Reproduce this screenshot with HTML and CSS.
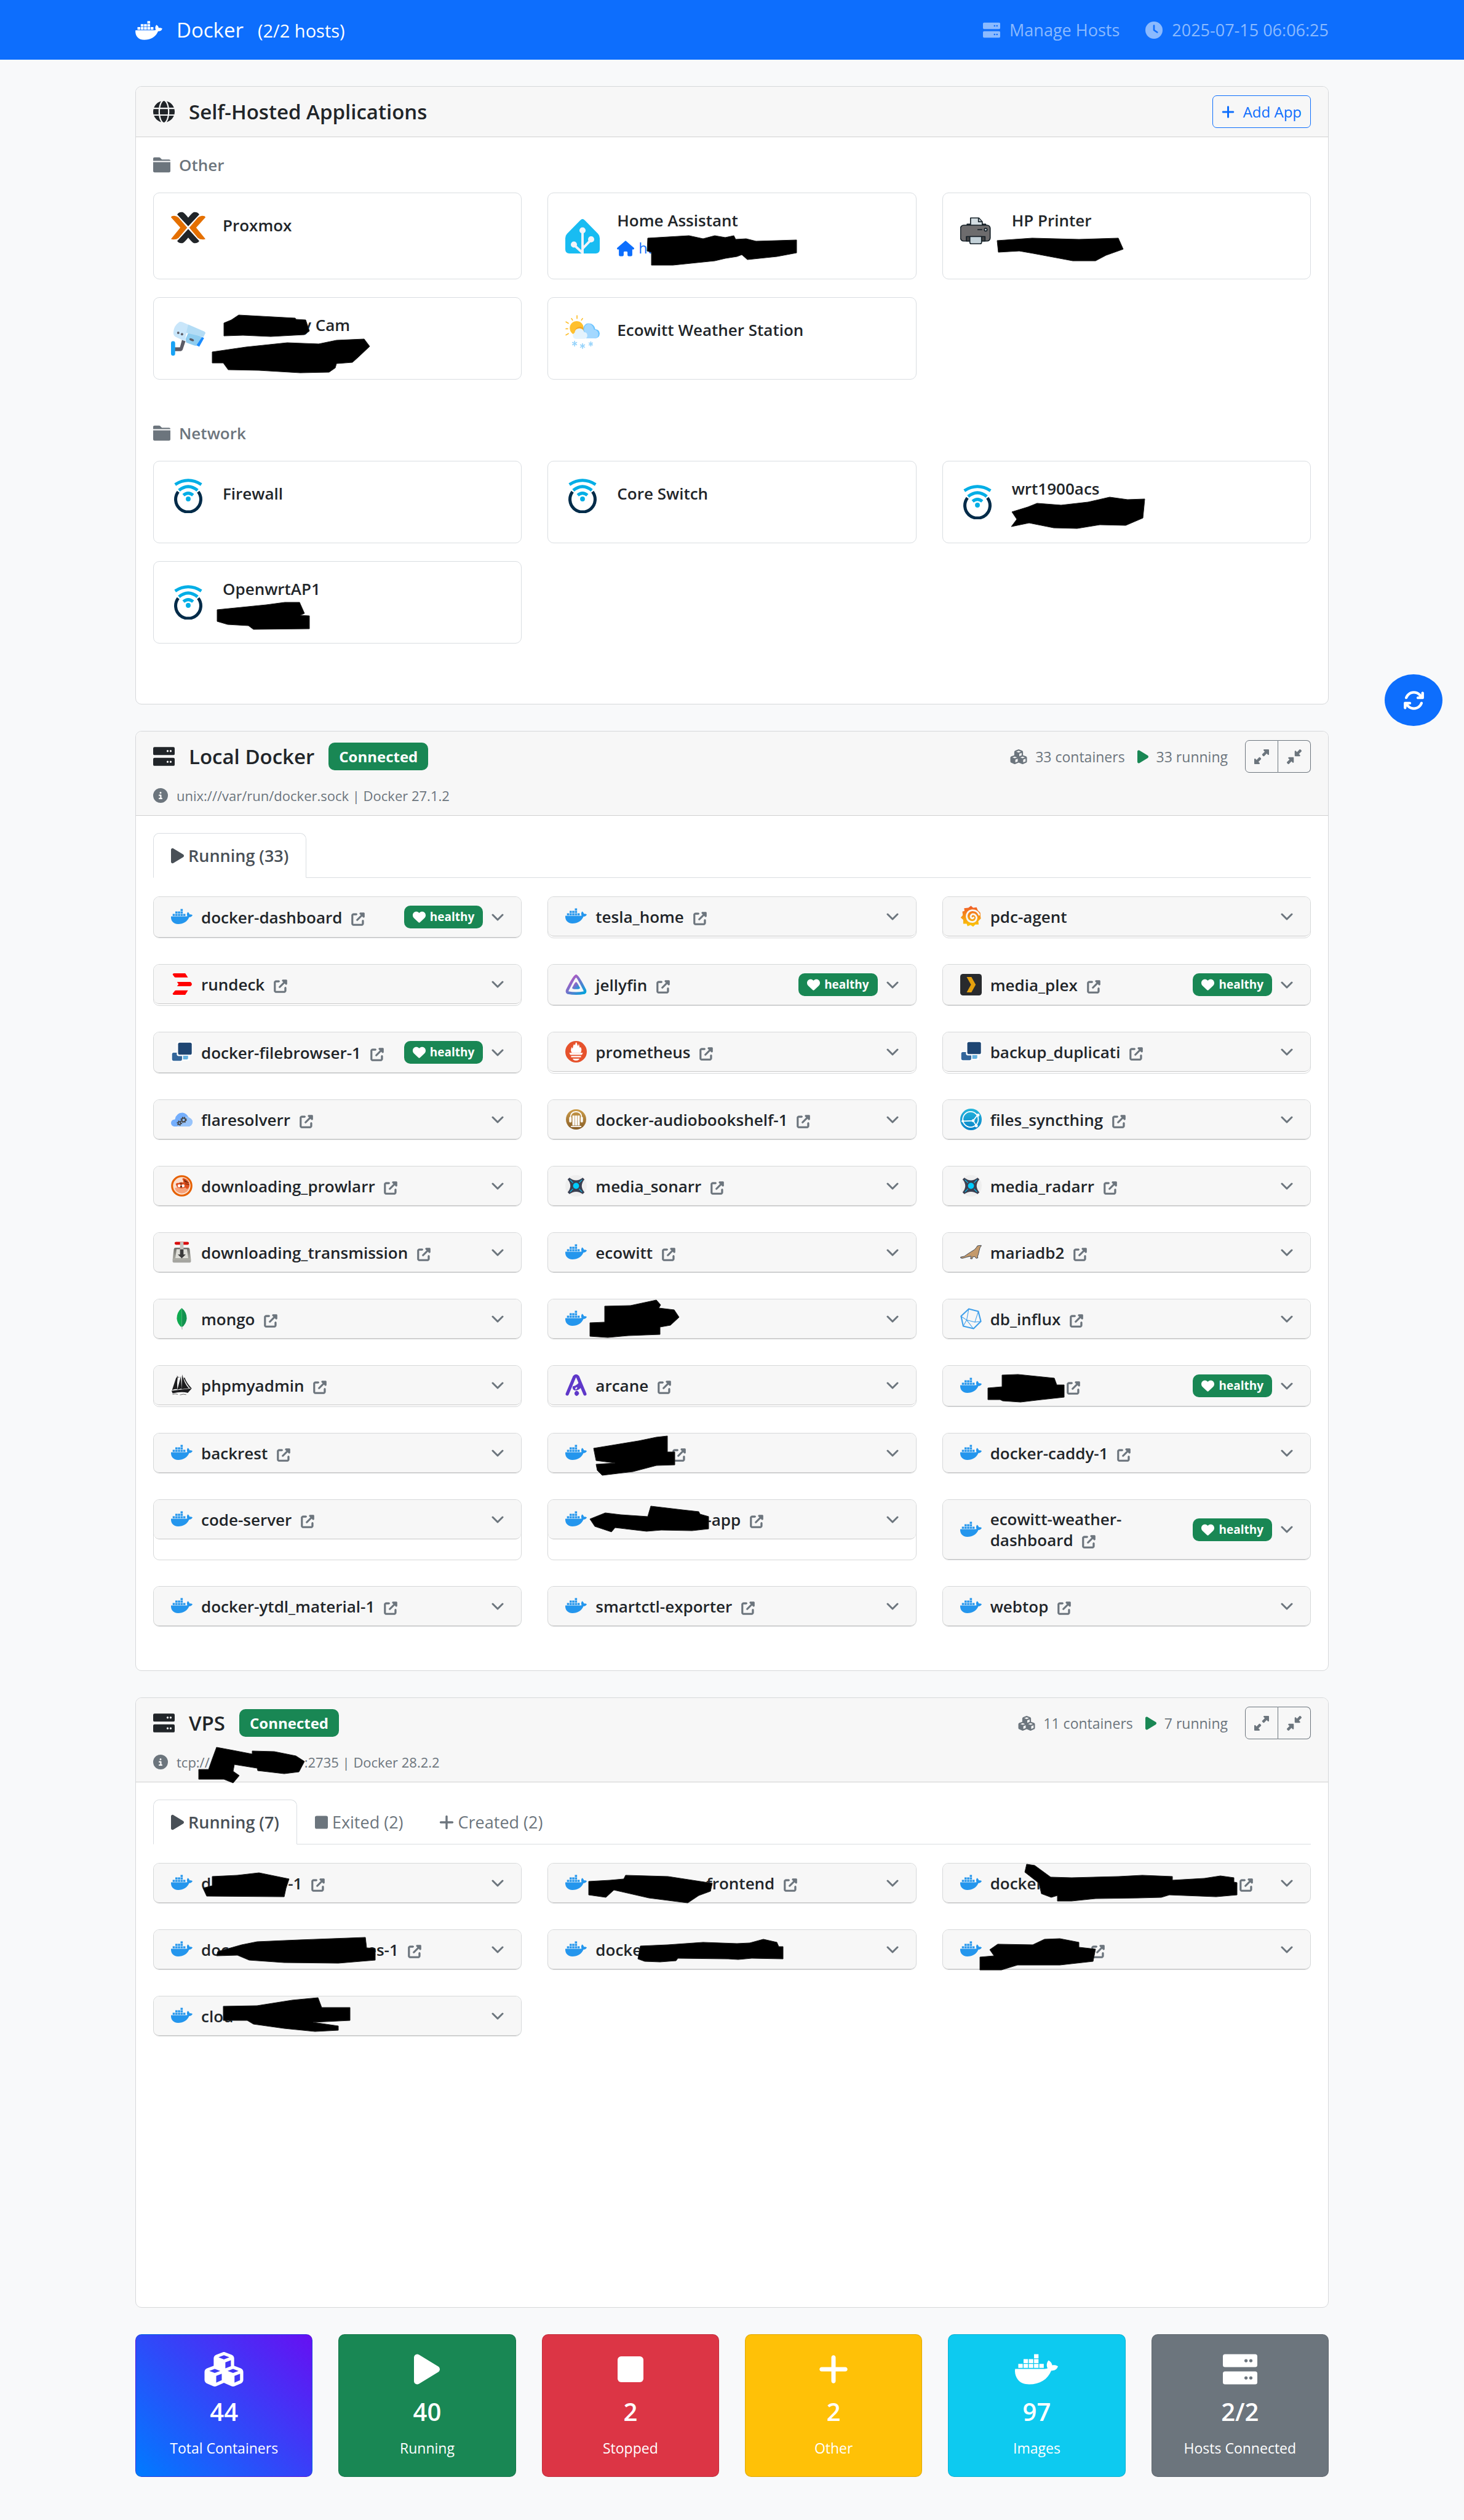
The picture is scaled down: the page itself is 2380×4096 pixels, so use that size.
FILE: index.html
```html
<!DOCTYPE html>
<html lang="en">
<head>
<meta charset="utf-8">
<meta name="viewport" content="width=device-width, initial-scale=1">
<title>Docker Dashboard</title>
<link rel="stylesheet" href="styles.css">
</head>
<body>
<svg class="sprite" aria-hidden="true">
<defs>
<linearGradient id="g-jelly" x1="0" y1="0" x2="1" y2="1"><stop offset="0.2" stop-color="#aa5cc3"/><stop offset="1" stop-color="#00a4dc"/></linearGradient>
<linearGradient id="g-graf" x1="0" y1="0" x2="0" y2="1"><stop offset="0" stop-color="#f05a28"/><stop offset="1" stop-color="#fbca0a"/></linearGradient>
<linearGradient id="g-abs" x1="0" y1="0" x2="0" y2="1"><stop offset="0" stop-color="#cd9d49"/><stop offset="1" stop-color="#875d27"/></linearGradient>
<linearGradient id="g-sync" x1="0" y1="0" x2="0" y2="1"><stop offset="0" stop-color="#26b6db"/><stop offset="1" stop-color="#0882c8"/></linearGradient>
<linearGradient id="g-trans" x1="0" y1="0" x2="0" y2="1"><stop offset="0" stop-color="#6d6d68"/><stop offset="1" stop-color="#b5b5ae"/></linearGradient>
</defs>
<symbol id="whale" viewBox="0 0 640 512"><path d="M349.9 236.3h-66.1v-59.4h66.1v59.4zm0-204.3h-66.1v60.7h66.1V32zm78.2 144.8H362v59.4h66.1v-59.4zm-156.3-72.1h-66.1v60.1h66.1v-60.1zm78.1 0h-66.1v60.1h66.1v-60.1zm276.8 100c-14.4-9.7-47.6-13.2-73.1-8.4-3.3-24-16.7-44.9-41.1-63.7l-14-9.3-9.3 14c-18.4 27.8-23.4 73.6-3.7 103.8-8.7 4.7-25.8 11.1-48.4 10.7H2.4c-8.7 50.8 5.8 116.8 44 162.1 37.1 43.9 92.7 66.2 165.4 66.2 157.4 0 273.9-72.5 328.4-204.2 21.4.4 67.6.1 91.3-45.2 1.5-2.5 6.6-13.2 8.5-17.1l-13.3-8.9zm-511.1-27.9h-66v59.4h66.1v-59.4zm78.1 0h-66.1v59.4h66.1v-59.4zm78.1 0h-66.1v59.4h66.1v-59.4zm-78.1-72.1h-66.1v60.1h66.1v-60.1z"/></symbol>
<symbol id="server" viewBox="0 0 512 512"><path fill-rule="evenodd" d="M32 32H480a32 32 0 0 1 32 32V192a32 32 0 0 1-32 32H32a32 32 0 0 1-32-32V64a32 32 0 0 1 32-32zM344 104a24 24 0 1 0 0 48 24 24 0 1 0 0-48zM416 104a24 24 0 1 0 0 48 24 24 0 1 0 0-48zM32 288H480a32 32 0 0 1 32 32V448a32 32 0 0 1-32 32H32a32 32 0 0 1-32-32V320a32 32 0 0 1 32-32zM344 360a24 24 0 1 0 0 48 24 24 0 1 0 0-48zM416 360a24 24 0 1 0 0 48 24 24 0 1 0 0-48z"/></symbol>
<symbol id="clock" viewBox="0 0 512 512"><path fill-rule="evenodd" d="M256 0a256 256 0 1 1 0 512A256 256 0 1 1 256 0zM232 120V256c0 8 4 15.5 10.7 20l96 64c11 7.4 25.9 4.4 33.3-6.7s4.4-25.9-6.7-33.3L280 243.2V120c0-13.3-10.7-24-24-24s-24 10.7-24 24z"/></symbol>
<symbol id="globe" viewBox="0 0 512 512"><path d="M352 256c0 22.2-1.2 43.6-3.3 64H163.3c-2.2-20.4-3.3-41.8-3.3-64s1.2-43.6 3.3-64H348.7c2.2 20.4 3.3 41.8 3.3 64zm28.8-64H503.9c5.3 20.5 8.1 41.9 8.1 64s-2.8 43.5-8.1 64H380.8c2.1-20.6 3.2-42 3.2-64s-1.1-43.4-3.2-64zm112.6-32H376.7c-10-63.9-29.8-117.4-55.3-151.6c78.3 20.7 142 77.5 171.9 151.6zm-149.1 0H167.7c6.1-36.4 15.5-68.6 27-94.7c10.5-23.6 22.2-40.7 33.5-51.5C239.4 3.2 248.7 0 256 0s16.6 3.2 27.8 13.8c11.3 10.8 23 27.9 33.5 51.5c11.6 26 20.9 58.2 27 94.7zm-209 0H18.6C48.6 85.9 112.2 29.1 190.6 8.4C165.1 42.6 145.3 96.1 135.3 160zM8.1 192H131.2c-2.1 20.6-3.2 42-3.2 64s1.1 43.4 3.2 64H8.1C2.8 299.5 0 278.1 0 256s2.8-43.5 8.1-64zM194.7 446.6c-11.6-26-20.9-58.2-27-94.6H344.3c-6.1 36.4-15.5 68.6-27 94.6c-10.5 23.6-22.2 40.7-33.5 51.5C272.6 508.8 263.3 512 256 512s-16.6-3.2-27.8-13.8c-11.3-10.8-23-27.9-33.5-51.5zM135.3 352c10 63.9 29.8 117.4 55.3 151.6C112.2 482.9 48.6 426.1 18.6 352H135.3zm358.1 0c-30 74.1-93.6 130.9-171.9 151.6c25.5-34.2 45.2-87.7 55.3-151.6H493.4z"/></symbol>
<symbol id="folder" viewBox="0 0 512 512"><path d="M0 138V72C0 48 16 32 40 32H180c12 0 22 4 30 12l46 46c5 4 10 6 16 6H472c24 0 40 14 40 42zM0 172H512V440c0 24-16 40-40 40H40c-24 0-40-16-40-40z"/></symbol>
<symbol id="plus" viewBox="0 0 448 512"><path d="M256 80c0-17.7-14.3-32-32-32s-32 14.3-32 32V224H48c-17.7 0-32 14.3-32 32s14.3 32 32 32H192V432c0 17.7 14.3 32 32 32s32-14.3 32-32V288H400c17.7 0 32-14.3 32-32s-14.3-32-32-32H256V80z"/></symbol>
<symbol id="play" viewBox="0 0 384 512"><path d="M73 39c-14.8-9.1-33.4-9.4-48.5-.9S0 62.6 0 80V432c0 17.4 9.4 33.4 24.5 41.9s33.7 8.1 48.5-.9L361 297c14.3-8.7 23-24.2 23-41s-8.7-32.2-23-41L73 39z"/></symbol>
<symbol id="stop" viewBox="0 0 384 512"><rect y="64" width="384" height="384" rx="52"/></symbol>
<symbol id="info" viewBox="0 0 512 512"><path fill-rule="evenodd" d="M256 512A256 256 0 1 0 256 0a256 256 0 1 0 0 512zM216 336h24V272H216c-13.3 0-24-10.7-24-24s10.7-24 24-24h48c13.3 0 24 10.7 24 24v88h8c13.3 0 24 10.7 24 24s-10.7 24-24 24H216c-13.3 0-24-10.7-24-24s10.7-24 24-24zm40-208a32 32 0 1 1 0 64 32 32 0 1 1 0-64z"/></symbol>
<symbol id="chev" viewBox="0 0 20 12"><path d="M2 2l8 8 8-8" fill="none" stroke="currentColor" stroke-width="3" stroke-linecap="round" stroke-linejoin="round"/></symbol>
<symbol id="heart" viewBox="0 0 512 512"><path d="M47.6 300.4L228.3 469.1c7.5 7 17.4 10.9 27.7 10.9s20.2-3.9 27.7-10.9L464.4 300.4c30.4-28.3 47.6-68 47.6-109.5v-5.8c0-69.9-50.5-129.5-119.4-141C347 36.5 300.6 51.4 268 84L256 96 244 84c-32.6-32.6-79-47.5-124.6-39.9C50.5 55.6 0 115.2 0 185.1v5.8c0 41.5 17.2 81.2 47.6 109.5z"/></symbol>
<symbol id="cubes" viewBox="0 0 576 512"><path fill-rule="evenodd" d="M290.8 48.6l78.4 29.7L288 109.5 206.8 78.3l78.4-29.7c1.8-.7 3.8-.7 5.7 0zM136 92.5V204.7c-1.3 .4-2.6 .8-3.9 1.3l-96 36.4C14.4 250.6 0 271.5 0 294.7V413.9c0 22.2 13.1 42.3 33.5 51.3l96 42.2c14.4 6.3 30.7 6.3 45.1 0L288 457.5l113.5 49.9c14.4 6.3 30.7 6.3 45.1 0l96-42.2c20.3-8.9 33.5-29.1 33.5-51.3V294.7c0-23.3-14.4-44.1-36.1-52.4l-96-36.4c-1.3-.5-2.6-.9-3.9-1.3V92.5c0-23.3-14.4-44.1-36.1-52.4l-96-36.4c-12.8-4.8-26.9-4.8-39.7 0l-96 36.4C150.4 48.4 136 69.3 136 92.5zM392 210.6l-82.4 31.2V152.6L392 121v89.6zM154.8 250.9l78.4 29.7L152 311.7 70.8 280.6l78.4-29.7c1.8-.7 3.8-.7 5.7 0zm18.8 204.4V354.8L256 323.2v95.9l-82.4 36.2zM421.2 250.9c1.8-.7 3.8-.7 5.7 0l78.4 29.7L424 311.7l-81.2-31.1 78.4-29.7zM523.2 421.2l-77.6 34.1V354.8L528 323.2v90.7c0 3.2-1.9 6-4.8 7.3z"/></symbol>
<symbol id="ext" viewBox="-10 -10 532 532"><path stroke="currentColor" stroke-width="14" d="M352 0c-12.9 0-24.6 7.8-29.6 19.8s-2.2 25.7 6.9 34.9L370.7 96 201.4 265.4c-12.5 12.5-12.5 32.8 0 45.3s32.8 12.5 45.3 0L416 141.3l41.4 41.4c9.2 9.2 22.9 11.9 34.9 6.9s19.8-16.6 19.8-29.6V32c0-17.7-14.3-32-32-32H352zM80 32C35.8 32 0 67.8 0 112V432c0 44.2 35.8 80 80 80H400c44.2 0 80-35.8 80-80V320c0-17.7-14.3-32-32-32s-32 14.3-32 32V432c0 8.8-7.2 16-16 16H80c-8.8 0-16-7.2-16-16V112c0-8.8 7.2-16 16-16H192c17.7 0 32-14.3 32-32s-14.3-32-32-32H80z"/></symbol>
<symbol id="expand" viewBox="0 0 512 512"><path d="M344 0H488c13.3 0 24 10.7 24 24V168c0 9.7-5.8 18.5-14.8 22.2s-19.3 1.7-26.2-5.2l-39-39-87 87c-9.4 9.4-24.6 9.4-33.9 0l-32-32c-9.4-9.4-9.4-24.6 0-33.9l87-87L327 41c-6.9-6.9-8.9-17.2-5.2-26.2S334.3 0 344 0zM168 512H24c-13.3 0-24-10.7-24-24V344c0-9.7 5.8-18.5 14.8-22.2s19.3-1.7 26.2 5.2l39 39 87-87c9.4-9.4 24.6-9.4 33.9 0l32 32c9.4 9.4 9.4 24.6 0 33.9l-87 87 39 39c6.9 6.9 8.9 17.2 5.2 26.2s-12.5 14.8-22.2 14.8z"/></symbol>
<symbol id="compress" viewBox="0 0 512 512"><path d="M439 7c9.4-9.4 24.6-9.4 33.9 0l32 32c9.4 9.4 9.4 24.6 0 33.9l-87 87 39 39c6.9 6.9 8.9 17.2 5.2 26.2s-12.5 14.8-22.2 14.8H296c-13.3 0-24-10.7-24-24V72c0-9.7 5.8-18.5 14.8-22.2s19.3-1.7 26.2 5.2l39 39L439 7zM72 272H216c13.3 0 24 10.7 24 24V440c0 9.7-5.8 18.5-14.8 22.2s-19.3 1.7-26.2-5.2l-39-39L73 505c-9.4 9.4-24.6 9.4-33.9 0L7 473c-9.4-9.4-9.4-24.6 0-33.9l87-87L55 313c-6.9-6.9-8.9-17.2-5.2-26.2s12.5-14.8 22.2-14.8z"/></symbol>
<symbol id="sync" viewBox="0 0 512 512"><path d="M105.1 202.6c7.7-21.8 20.2-42.3 37.8-59.8c62.5-62.5 163.8-62.5 226.3 0L386.3 160H352c-17.7 0-32 14.3-32 32s14.3 32 32 32H463.5h.4c17.7 0 32-14.3 32-32V80c0-17.7-14.3-32-32-32s-32 14.3-32 32v35.2L414.4 97.6c-87.5-87.5-229.3-87.5-316.8 0C73.2 122 55.6 150.7 44.8 181.4c-5.9 16.7 2.9 34.9 19.5 40.8s34.9-2.9 40.8-19.5zM39 289.3c-5 1.5-9.8 4.2-13.7 8.2c-4 4-6.7 8.8-8.1 14c-.3 1.2-.6 2.5-.8 3.8c-.3 1.7-.4 3.4-.4 5.1V432c0 17.7 14.3 32 32 32s32-14.3 32-32V396.9l17.6 17.5c87.5 87.4 229.3 87.4 316.7 0c24.4-24.4 42.1-53.1 52.9-83.7c5.9-16.7-2.9-34.9-19.5-40.8s-34.9 2.9-40.8 19.5c-7.7 21.8-20.2 42.3-37.8 59.8c-62.5 62.5-163.8 62.5-226.3 0l-.1-.1L125.6 352H160c17.7 0 32-14.3 32-32s-14.3-32-32-32H48.4c-1.6 0-3.2 .1-4.8 .3s-3.1 .5-4.6 1z"/></symbol>
<symbol id="house" viewBox="0 0 576 512"><path d="M575.8 255.5c0 18-15 32.1-32 32.1h-32l.7 160.2c0 2.7-.2 5.4-.5 8.1V472c0 22.1-17.9 40-40 40H392c-22.1 0-40-17.9-40-40V384c0-17.7-14.3-32-32-32H256c-17.7 0-32 14.3-32 32v88c0 22.1-17.9 40-40 40H104c-22.1 0-40-17.9-40-40V287.6H32c-18 0-32-14-32-32.1c0-9 3-17 10-24L266.4 8c7-7 15-8 22-8s15 2 21 7L564.8 231.5c8 7 12 15 11 24z"/></symbol>

<symbol id="proxmox" viewBox="0 0 100 100"><path d="M18 12Q22 4 33 5Q38 6 50 21Q62 6 67 5Q78 4 82 12L50 46zM18 89Q22 96 33 95Q38 94 50 79Q62 94 67 95Q78 96 82 89L50 54z"/><path fill="#e57000" d="M0 20Q2 15 12 16Q18 17 22 21L47 50L22 80Q14 86 3 84L0 83L27 50zM100 20Q98 15 88 16Q82 17 78 21L53 50L78 80Q86 86 97 84L100 83L73 50z"/></symbol>
<symbol id="hass" viewBox="0 0 100 100"><path fill="#18bcf2" d="M50 0Q53 0 57 4L95 43Q100 48 100 56V88Q100 100 88 100H12Q0 100 0 88V56Q0 48 5 43L43 4Q47 0 50 0z"/><g stroke="#f2f4f9" stroke-width="7" fill="none"><path d="M50 100V34M50 98L26 76M50 86L75 60"/></g><g fill="#f2f4f9"><circle cx="50" cy="33" r="9"/><circle cx="25" cy="74" r="9"/><circle cx="75" cy="59" r="9"/></g></symbol>
<symbol id="printer" viewBox="0 0 100 100"><g stroke="#141f26" stroke-width="3" stroke-linejoin="round"><path fill="#555" d="M20 22h54v14H20z"/><path fill="#d3dde2" d="M30 4h24l10 11v20H30z"/><path fill="#d3dde2" d="M53 5v10h10"/><rect x="1" y="25" width="86" height="46" rx="9" fill="#6d6c6d"/><path fill="#444" d="M18 71V58h54v13z"/><path fill="#c3d1d8" d="M28 58h34v17q0 4-4 4H32q-4 0-4-4z"/><path d="M50 38h14"/><circle cx="74" cy="38" r="4" fill="#d3dde2"/></g></symbol>
<symbol id="camera" viewBox="0 0 100 100"><path fill="#5c5c66" d="M10 76h16l6-22 10 4-8 24q-2 5-8 5H10z"/><rect y="58" width="12" height="42" rx="6" fill="#19a3f5"/><path fill="#8fcdf0" d="M42 52L52 30 90 46 80 66Q76 74 66 70L44 62z"/><path fill="#1a8cff" d="M90 46L96 49 82 74 74 70z"/><path fill="#c9e6fa" d="M22 4Q26 0 34 3L96 30Q102 33 98 38L94 46 46 30 40 58 14 46Q6 42 7 32Q8 14 22 4z"/><path fill="#b3dcf5" d="M50 10L96 30Q102 33 98 38L94 46 44 34z"/><g fill="#5c5c66"><circle cx="21" cy="34" r="3.500"/><circle cx="32" cy="38" r="3.500"/><ellipse cx="60" cy="54" rx="7" ry="3.500" transform="rotate(22 60 54)"/></g></symbol>
<symbol id="weather" viewBox="0 0 100 100"><g stroke="#fdbf2d" stroke-width="3" stroke-linecap="round"><path d="M34 2v8M18 10l3 5M50 10l-3 5M2 20l7 4M2 40h5M2 58l7-4"/></g><circle cx="33" cy="38" r="20" fill="#ffc02e"/><circle cx="43" cy="50" r="16" fill="#f7a721"/><path fill="#69c3ff" d="M58 68h26q15 0 16-14-1-12-13-13-3-16-19-17-14 0-16 17z"/><path fill="#a3d8ff" d="M58 68h26q12 0 12-13-1-11-13-13-3-15-15-17-12 2-14 16z"/><path fill="#e4f3fd" d="M30 69h26q8-1 8-10-1-9-9-9-4-12-15-11-12 1-13 13-5 2-5 9 1 7 8 8z"/><g stroke="#98d4fb" stroke-width="3" stroke-linecap="round"><path d="M27 76v14M21 79.500l12 7M33 79.500l-12 7M50 83v14M44 86.500l12 7M56 86.500l-12 7M74 78v12M69 81l10 6M79 81l-10 6"/></g></symbol>
<symbol id="openwrt" viewBox="0 0 82 100"><g fill="none" stroke-width="9"><path stroke="#002b49" d="M12 38A36.500 36.500 0 1 0 70 38"/><path stroke="#00aee6" d="M3 17Q41-7 79 17M14 34Q41 12 68 34M27 48Q41 36 55 48"/></g><circle cx="41" cy="59" r="7" fill="#00aee6"/></symbol>

<symbol id="docker" viewBox="0 0 640 640"><g transform="translate(0 50)" fill="#2496ed"><path d="M349.900 236.300h-66.100v-59.400h66.100v59.400zm0-204.300h-66.100v60.700h66.100V32zm78.200 144.800H362v59.400h66.100v-59.400zm-156.300-72.100h-66.100v60.100h66.100v-60.100zm78.100 0h-66.100v60.100h66.100v-60.100zm276.800 100c-14.400-9.700-47.600-13.200-73.100-8.400-3.300-24-16.700-44.900-41.100-63.700l-14-9.300-9.300 14c-18.400 27.800-23.400 73.600-3.700 103.800-8.700 4.700-25.800 11.100-48.400 10.700H2.400c-8.700 50.800 5.800 116.800 44 162.100 37.100 43.900 92.700 66.200 165.400 66.200 157.400 0 273.900-72.500 328.400-204.200 21.400.4 67.600.1 91.300-45.200 1.500-2.500 6.600-13.200 8.500-17.100l-13.300-8.900zm-511.100-27.900h-66v59.400h66.100v-59.400zm78.100 0h-66.100v59.400h66.100v-59.400zm78.100 0h-66.100v59.400h66.100v-59.400zm-78.100-72.100h-66.100v60.100h66.100v-60.100z"/></g></symbol>
<symbol id="rundeck" viewBox="0 0 82 87"><path fill="red" d="M4 5Q5 0 10 0H55L66 17H17Q12 17 10 13zM22 35H76Q82 39 82 44Q82 49 76 52H22L28 44zM4 82L12 72Q14 69 18 69H66L55 87H8Q4 86 4 82z"/></symbol>
<symbol id="duplicati" viewBox="0 0 82 82"><path fill="#fff" d="M22 0h60v54H72v18H42v5H0V38h22z"/><rect x="27" y="4" width="52" height="46" rx="6" fill="#1e4673"/><path fill="#33669a" d="M10 42h12v8q0 5 6 5h14v12q0 6-6 6H10q-6 0-6-6V48q0-6 6-6z"/><path fill="#65b1e0" d="M46 54h19v9q0 5-5 5H46z"/></symbol>
<symbol id="flare" viewBox="0 0 82 82"><path fill="#74aefc" d="M12 68Q0 66 0 54 1 42 15 41 19 16 44 15 62 18 66 34 80 36 82 50 81 66 66 68z"/><path fill="#98c4fb" d="M22 68L54 30Q70 30 72 37 82 42 82 52 80 66 66 68z"/><g fill="none" stroke="#444" stroke-width="4"><circle cx="48" cy="43" r="7"/><circle cx="32" cy="55" r="5"/></g><g fill="none" stroke="#444" stroke-width="4" stroke-dasharray="4 4"><circle cx="48" cy="43" r="10"/><circle cx="32" cy="55" r="8"/></g></symbol>
<symbol id="prowlarr" viewBox="0 0 100 100"><circle cx="50" cy="50" r="45" fill="#fbdfce" stroke="#e66000" stroke-width="9"/><path fill="#f6a27a" d="M17 60Q50 50 84 58Q78 84 50 85Q24 84 17 60z"/><path fill="#e0501f" d="M22 42Q26 34 34 37Q44 30 58 34L56 24Q48 14 60 14Q82 20 86 44Q86 62 74 64L66 58Q44 66 28 56z"/><g fill="#fff"><circle cx="38" cy="50" r="7"/><circle cx="56" cy="50" r="7"/></g><g stroke="#5a2411" stroke-width="3"><path d="M60 22l14 10M62 30l20 6M66 40l18 4M44 36v7M50 36v7"/></g><circle cx="47" cy="53" r="4" fill="#222"/></symbol>
<symbol id="transmission" viewBox="0 0 82 87"><rect x="12" y="1" width="58" height="12" rx="6" fill="#d80d0d"/><path fill="url(#g-trans)" d="M16 25h50q6 0 7 6l5 42q0 5-4 5H8q-4 0-4-5l5-42q1-6 7-6z"/><path fill="#deded8" d="M20 31h42l5 36H15z"/><path fill="#a5a5a0" d="M4 74h74v6q0 5-5 5H9q-5 0-5-5z"/><path fill="#c4c4c0" d="M34 2h14v30H34z"/><path fill="#3b3b3b" d="M34 32h14v20h9L41 68 25 52h9z"/></symbol>
<symbol id="mongo" viewBox="0 0 82 82"><path fill="#10aa50" d="M41 0Q22 16 22 40 24 62 41 74z"/><path fill="#12924f" d="M41 0Q60 16 60 40 58 62 41 74z"/><path fill="#b8c4c2" d="M39 70h4l1 12h-3z"/></symbol>
<symbol id="sails" viewBox="0 0 82 82"><path fill="#1d1d1f" d="M19 14L4 60Q14 54 24 56 22 30 26 6zM38 6L24 58l16-4zM43 0L40 56l28-3Q50 34 43 0zM48 14Q62 42 72 52L78 52Q60 34 52 12zM2 62L72 54 80 52 64 70Q40 64 6 72z"/><g stroke="#555" stroke-width="2" fill="none"><path d="M6 76q10-4 20 0M34 78q14-5 24-1M22 6l5 3M24 11h8"/></g></symbol>
<symbol id="jellyfin" viewBox="0 0 100 100"><path fill="none" stroke="url(#g-jelly)" stroke-width="13" stroke-linejoin="round" d="M50 9Q58 10 90 74 94 84 88 87 50 94 12 87 6 84 10 74 42 10 50 9z"/><path fill="url(#g-jelly)" d="M50 37Q55 38 68 64 70 70 50 71 30 70 32 64 45 38 50 37z"/></symbol>
<symbol id="prometheus" viewBox="0 0 100 100"><circle cx="50" cy="50" r="50" fill="#e6522c"/><g fill="#fff"><path d="M30 54Q22 44 30 28 33 38 35 32 37 18 41 14 44 26 47 12 49 4 53 8 56 20 59 24 61 16 63 14 66 28 68 32 70 29 71 28 80 42 71 54z"/><path d="M18 55h64l-5 9H23zM27 69h46v7H27zM34 82h32q-4 9-16 9t-16-9z"/></g></symbol>
<symbol id="abs" viewBox="0 0 100 100"><circle cx="50" cy="50" r="47" fill="url(#g-abs)"/><path fill="none" stroke="#fff" stroke-width="5" d="M24 42Q24 15 50 14 76 15 76 42"/><g fill="#fff"><rect x="18" y="38" width="11" height="26" rx="5"/><rect x="71" y="38" width="11" height="26" rx="5"/><rect x="33" y="32" width="10" height="46"/><rect x="45" y="32" width="10" height="46"/><rect x="57" y="32" width="10" height="46"/><rect x="26" y="80" width="48" height="5"/></g></symbol>
<symbol id="arr" viewBox="0 0 100 100"><circle cx="50" cy="50" r="50" fill="#eee"/><path fill="#3a3f51" d="M19 12Q50 36 81 12L89 20Q64 50 89 80L81 88Q50 66 19 88L11 80Q36 50 11 20z"/><path stroke="#0cf" stroke-width="3" d="M22 22l14 14M78 22L64 36M22 78l14-14M78 78L64 64"/><circle cx="50" cy="50" r="14" fill="#0cf"/></symbol>
<symbol id="grafana" viewBox="0 0 100 100"><path fill="url(#g-graf)" d="M38 10L50 1 60 10 76 8 82 22 93 32Q95 40 94 48L96 60 84 72 86 88 70 88 60 98 48 90 34 96 30 84 14 84 14 66 2 56 12 44 10 28 20 24 18 12z"/><path fill="none" stroke="#f7f7f7" stroke-width="8" stroke-linecap="round" d="M88 42Q78 20 54 22 30 26 30 52 34 76 58 76 76 72 76 54 70 38 56 40 46 46 50 56 56 62 62 56"/></symbol>
<symbol id="plex" viewBox="0 0 100 100"><rect width="100" height="100" rx="13" fill="#282a2d"/><path fill="#e5a00d" d="M30 14h22l20 36-20 36H30l20-36z"/></symbol>
<symbol id="syncthing" viewBox="0 0 100 100"><circle cx="50" cy="50" r="50" fill="url(#g-sync)"/><g fill="none" stroke="#fff" stroke-width="5"><circle cx="48" cy="50" r="36"/><path d="M12 58L60 56 82 28M60 56L74 78"/></g><g fill="#fff"><circle cx="12" cy="58" r="6"/><circle cx="60" cy="56" r="7"/><circle cx="83" cy="30" r="7"/><circle cx="75" cy="80" r="7"/></g></symbol>
<symbol id="mariadb" viewBox="0 0 100 100"><path fill="#c49a6c" stroke="#2b3a4d" stroke-width="2.500" stroke-linejoin="round" d="M2 72Q20 72 34 58 52 46 66 38 76 28 80 20 88 18 98 18 98 22 92 28 88 42 84 60 78 70 82 76L74 78 68 70 56 72 56 80 48 80 50 68Q28 72 18 76 8 80 2 76z"/></symbol>
<symbol id="influx" viewBox="0 0 100 100"><g fill="none" stroke="#3f9fea" stroke-width="6" stroke-linejoin="round"><path d="M40 4L84 16 96 62 62 96 14 84 4 38z"/><path d="M40 3L30 56 62 97M30 56L68 66 84 16M30 56L3 38M68 66L96 62M14 84L30 56" stroke-width="3"/></g></symbol>
<symbol id="arcane" viewBox="0 0 100 100"><g fill="none" stroke="#5f38c9" stroke-width="15" stroke-linecap="round" stroke-linejoin="round"><path d="M9 91L42 12Q50 2 58 12L91 91"/></g><path fill="#5f38c9" d="M34 56Q60 50 66 30L72 62Q62 74 44 74 32 70 34 56zM50 76Q64 78 64 90 56 104 48 98 36 88 50 76z"/><path fill="#f7f7f7" d="M46 66q2-8 10-6-1 8-8 11z"/></symbol>
</svg>

<nav class="navbar">
  <div class="container nav-row">
    <a class="brand" href="#"><svg class="i-brand"><use href="#whale"/></svg><span>Docker</span><small>(2/2 hosts)</small></a>
    <div class="nav-right">
      <a class="nav-link" href="#hosts"><svg class="i-28"><use href="#server"/></svg>Manage Hosts</a>
      <span class="nav-link"><svg class="i-28"><use href="#clock"/></svg><time datetime="2025-07-15T06:06:25">2025-07-15 06:06:25</time></span>
    </div>
  </div>
</nav>

<button class="refresh" aria-label="Refresh"><svg class="i-35"><use href="#sync"/></svg></button>

<main class="container stack">

<section class="card">
  <header class="card-head">
    <div class="head-row">
      <h2 class="title"><svg class="i-35"><use href="#globe"/></svg>Self-Hosted Applications</h2>
      <button class="btn btn-blue"><svg class="i-plus"><use href="#plus"/></svg>Add App</button>
    </div>
  </header>
  <div class="card-body">
    <h3 class="group"><svg class="i-28"><use href="#folder"/></svg>Other</h3>
    <div class="apps">
      <article class="app"><svg class="app-icon"><use href="#proxmox"/></svg><div><h4>Proxmox</h4></div></article>
      <article class="app"><svg class="app-icon"><use href="#hass"/></svg><div><h4>Home Assistant</h4><p class="app-url"><a href="#"><svg class="i-house"><use href="#house"/></svg>http://</a></p></div>
        <svg class="mark"><path d="M162 73L229 69 252 74 271 69 288 72 302 69 305 75 322 74 338 78 372 77 404 76V97L372 103 324 108 315 100 307 103 288 106 271 110 203 117H168V96L161 94z"/></svg></article>
      <article class="app"><svg class="app-icon"><use href="#printer"/></svg><div><h4>HP Printer</h4><p>&nbsp;</p></div>
        <svg class="mark"><path d="M88 77L145 73 221 75 285 73 293 91 265 101 248 110H211L147 98 124 94 90 96z"/></svg></article>
      <article class="app"><svg class="app-icon"><use href="#camera"/></svg><div><h4><span class="gap gap-130"></span>y Cam</h4><p>&nbsp;</p></div>
        <svg class="mark"><path d="M114 41L126 36 138 28 230 33 231 35 247 36 253 54 245 60 190 63 145 61 114 62zM95 88L150 80 217 73 268 75 297 69 342 67 351 79 333 96 323 105 297 107 295 114 285 121 238 122 171 118 121 117 113 106 95 106z"/></svg></article>
      <article class="app"><svg class="app-icon"><use href="#weather"/></svg><div><h4>Ecowitt Weather Station</h4></div></article>
    </div>
    <h3 class="group"><svg class="i-28"><use href="#folder"/></svg>Network</h3>
    <div class="apps">
      <article class="app"><svg class="app-icon"><use href="#openwrt"/></svg><div><h4>Firewall</h4></div></article>
      <article class="app"><svg class="app-icon"><use href="#openwrt"/></svg><div><h4>Core Switch</h4></div></article>
      <article class="app"><svg class="app-icon"><use href="#openwrt"/></svg><div><h4>wrt1900acs</h4><p>&nbsp;</p></div>
        <svg class="mark"><path d="M112 82L138 74 153 68 192 71 236 66 271 58 300 62 328 61 325 92 297 104 255 103 218 109 180 108 140 100 111 106 120 94z"/></svg></article>
      <article class="app"><svg class="app-icon"><use href="#openwrt"/></svg><div><h4>OpenwrtAP1</h4><p>&nbsp;</p></div>
        <svg class="mark"><path d="M103 78L183 70 213 66H237L245 84 238 87 253 88V109L162 110 154 104 120 102 103 97z"/></svg></article>
    </div>
  </div>
</section>

<section class="card">
  <header class="card-head">
    <div class="head-row">
      <h2 class="title"><svg class="i-35"><use href="#server"/></svg>Local Docker<span class="badge badge-lg">Connected</span></h2>
      <div class="head-side">
        <span class="count"><svg class="i-cubes"><use href="#cubes"/></svg>33 containers</span>
        <span class="count"><svg class="i-play green"><use href="#play"/></svg>33 running</span>
        <div class="btn-group"><button class="btn" aria-label="Expand all"><svg class="i-24"><use href="#expand"/></svg></button><button class="btn" aria-label="Collapse all"><svg class="i-24"><use href="#compress"/></svg></button></div>
      </div>
    </div>
    <p class="host"><svg class="i-24"><use href="#info"/></svg>unix:///var/run/docker.sock | Docker 27.1.2</p>
  </header>
  <div class="card-body">
    <div class="tabs" role="tablist"><button class="tab active" role="tab" aria-selected="true"><svg class="i-tab"><use href="#play"/></svg>Running (33)</button></div>
    <div class="boxes">
      <article class="box"><header><svg class="i-35"><use href="#docker"/></svg><h4>docker-dashboard <a href="#" aria-label="Open"><svg><use href="#ext"/></svg></a></h4><span class="badge"><svg><use href="#heart"/></svg>healthy</span><button aria-label="Toggle details"><svg><use href="#chev"/></svg></button></header></article>
      <article class="box"><header><svg class="i-35"><use href="#docker"/></svg><h4>tesla_home <a href="#" aria-label="Open"><svg><use href="#ext"/></svg></a></h4><button aria-label="Toggle details"><svg><use href="#chev"/></svg></button></header></article>
      <article class="box"><header><svg class="i-35"><use href="#grafana"/></svg><h4>pdc-agent</h4><button aria-label="Toggle details"><svg><use href="#chev"/></svg></button></header></article>

      <article class="box"><header><svg class="i-35"><use href="#rundeck"/></svg><h4>rundeck <a href="#" aria-label="Open"><svg><use href="#ext"/></svg></a></h4><button aria-label="Toggle details"><svg><use href="#chev"/></svg></button></header></article>
      <article class="box"><header><svg class="i-35"><use href="#jellyfin"/></svg><h4>jellyfin <a href="#" aria-label="Open"><svg><use href="#ext"/></svg></a></h4><span class="badge"><svg><use href="#heart"/></svg>healthy</span><button aria-label="Toggle details"><svg><use href="#chev"/></svg></button></header></article>
      <article class="box"><header><svg class="i-35"><use href="#plex"/></svg><h4>media_plex <a href="#" aria-label="Open"><svg><use href="#ext"/></svg></a></h4><span class="badge"><svg><use href="#heart"/></svg>healthy</span><button aria-label="Toggle details"><svg><use href="#chev"/></svg></button></header></article>

      <article class="box"><header><svg class="i-35"><use href="#duplicati"/></svg><h4>docker-filebrowser-1 <a href="#" aria-label="Open"><svg><use href="#ext"/></svg></a></h4><span class="badge"><svg><use href="#heart"/></svg>healthy</span><button aria-label="Toggle details"><svg><use href="#chev"/></svg></button></header></article>
      <article class="box"><header><svg class="i-35"><use href="#prometheus"/></svg><h4>prometheus <a href="#" aria-label="Open"><svg><use href="#ext"/></svg></a></h4><button aria-label="Toggle details"><svg><use href="#chev"/></svg></button></header></article>
      <article class="box"><header><svg class="i-35"><use href="#duplicati"/></svg><h4>backup_duplicati <a href="#" aria-label="Open"><svg><use href="#ext"/></svg></a></h4><button aria-label="Toggle details"><svg><use href="#chev"/></svg></button></header></article>

      <article class="box"><header><svg class="i-35"><use href="#flare"/></svg><h4>flaresolverr <a href="#" aria-label="Open"><svg><use href="#ext"/></svg></a></h4><button aria-label="Toggle details"><svg><use href="#chev"/></svg></button></header></article>
      <article class="box"><header><svg class="i-35"><use href="#abs"/></svg><h4>docker-audiobookshelf-1 <a href="#" aria-label="Open"><svg><use href="#ext"/></svg></a></h4><button aria-label="Toggle details"><svg><use href="#chev"/></svg></button></header></article>
      <article class="box"><header><svg class="i-35"><use href="#syncthing"/></svg><h4>files_syncthing <a href="#" aria-label="Open"><svg><use href="#ext"/></svg></a></h4><button aria-label="Toggle details"><svg><use href="#chev"/></svg></button></header></article>

      <article class="box"><header><svg class="i-35"><use href="#prowlarr"/></svg><h4>downloading_prowlarr <a href="#" aria-label="Open"><svg><use href="#ext"/></svg></a></h4><button aria-label="Toggle details"><svg><use href="#chev"/></svg></button></header></article>
      <article class="box"><header><svg class="i-35"><use href="#arr"/></svg><h4>media_sonarr <a href="#" aria-label="Open"><svg><use href="#ext"/></svg></a></h4><button aria-label="Toggle details"><svg><use href="#chev"/></svg></button></header></article>
      <article class="box"><header><svg class="i-35"><use href="#arr"/></svg><h4>media_radarr <a href="#" aria-label="Open"><svg><use href="#ext"/></svg></a></h4><button aria-label="Toggle details"><svg><use href="#chev"/></svg></button></header></article>

      <article class="box"><header><svg class="i-35"><use href="#transmission"/></svg><h4>downloading_transmission <a href="#" aria-label="Open"><svg><use href="#ext"/></svg></a></h4><button aria-label="Toggle details"><svg><use href="#chev"/></svg></button></header></article>
      <article class="box"><header><svg class="i-35"><use href="#docker"/></svg><h4>ecowitt <a href="#" aria-label="Open"><svg><use href="#ext"/></svg></a></h4><button aria-label="Toggle details"><svg><use href="#chev"/></svg></button></header></article>
      <article class="box"><header><svg class="i-35"><use href="#mariadb"/></svg><h4>mariadb2 <a href="#" aria-label="Open"><svg><use href="#ext"/></svg></a></h4><button aria-label="Toggle details"><svg><use href="#chev"/></svg></button></header></article>

      <article class="box"><header><svg class="i-35"><use href="#mongo"/></svg><h4>mongo <a href="#" aria-label="Open"><svg><use href="#ext"/></svg></a></h4><button aria-label="Toggle details"><svg><use href="#chev"/></svg></button></header></article>
      <article class="box"><header><svg class="i-35"><use href="#docker"/></svg><h4></h4><button aria-label="Toggle details"><svg><use href="#chev"/></svg></button></header>
        <svg class="mark"><path d="M92 11L134 10 176 1 183 9 180 14 205 17 213 29 199 42 182 45V57L130 59 97 62 68 60V38L92 37z"/></svg></article>
      <article class="box"><header><svg class="i-35"><use href="#influx"/></svg><h4>db_influx <a href="#" aria-label="Open"><svg><use href="#ext"/></svg></a></h4><button aria-label="Toggle details"><svg><use href="#chev"/></svg></button></header></article>

      <article class="box"><header><svg class="i-35"><use href="#sails"/></svg><h4>phpmyadmin <a href="#" aria-label="Open"><svg><use href="#ext"/></svg></a></h4><button aria-label="Toggle details"><svg><use href="#chev"/></svg></button></header></article>
      <article class="box"><header><svg class="i-35"><use href="#arcane"/></svg><h4>arcane <a href="#" aria-label="Open"><svg><use href="#ext"/></svg></a></h4><button aria-label="Toggle details"><svg><use href="#chev"/></svg></button></header></article>
      <article class="box"><header><svg class="i-35"><use href="#docker"/></svg><h4><span class="gap gap-110"></span> <a href="#" aria-label="Open"><svg><use href="#ext"/></svg></a></h4><span class="badge"><svg><use href="#heart"/></svg>healthy</span><button aria-label="Toggle details"><svg><use href="#chev"/></svg></button></header>
        <svg class="mark"><path d="M96 15L122 14 181 20 185 31H197V51L160 55 126 59 97 57 93 55H73V36L96 34z"/></svg></article>

      <article class="box"><header><svg class="i-35"><use href="#docker"/></svg><h4>backrest <a href="#" aria-label="Open"><svg><use href="#ext"/></svg></a></h4><button aria-label="Toggle details"><svg><use href="#chev"/></svg></button></header></article>
      <article class="box"><header><svg class="i-35"><use href="#docker"/></svg><h4><span class="gap gap-110"></span> <a href="#" aria-label="Open"><svg><use href="#ext"/></svg></a></h4><button aria-label="Toggle details"><svg><use href="#chev"/></svg></button></header>
        <svg class="mark"><path d="M74 24L147 12 176 6 194 4V30H206V51L176 52 138 62 88 68 80 60 78 50 109 48 78 44z"/></svg></article>
      <article class="box"><header><svg class="i-35"><use href="#docker"/></svg><h4>docker-caddy-1 <a href="#" aria-label="Open"><svg><use href="#ext"/></svg></a></h4><button aria-label="Toggle details"><svg><use href="#chev"/></svg></button></header></article>

      <article class="box"><header><svg class="i-35"><use href="#docker"/></svg><h4>code-server <a href="#" aria-label="Open"><svg><use href="#ext"/></svg></a></h4><button aria-label="Toggle details"><svg><use href="#chev"/></svg></button></header></article>
      <article class="box"><header><svg class="i-35"><use href="#docker"/></svg><h4><span class="gap gap-180"></span>-app <a href="#" aria-label="Open"><svg><use href="#ext"/></svg></a></h4><button aria-label="Toggle details"><svg><use href="#chev"/></svg></button></header>
        <svg class="mark"><path d="M68 31L93 21 118 24 162 27 167 10 218 16 245 19 247 23 261 27V47L234 50 184 49 160 51 109 45 103 52 76 43z"/></svg></article>
      <article class="box"><header><svg class="i-35"><use href="#docker"/></svg><h4>ecowitt-weather-dashboard <a href="#" aria-label="Open"><svg><use href="#ext"/></svg></a></h4><span class="badge"><svg><use href="#heart"/></svg>healthy</span><button aria-label="Toggle details"><svg><use href="#chev"/></svg></button></header></article>

      <article class="box"><header><svg class="i-35"><use href="#docker"/></svg><h4>docker-ytdl_material-1 <a href="#" aria-label="Open"><svg><use href="#ext"/></svg></a></h4><button aria-label="Toggle details"><svg><use href="#chev"/></svg></button></header></article>
      <article class="box"><header><svg class="i-35"><use href="#docker"/></svg><h4>smartctl-exporter <a href="#" aria-label="Open"><svg><use href="#ext"/></svg></a></h4><button aria-label="Toggle details"><svg><use href="#chev"/></svg></button></header></article>
      <article class="box"><header><svg class="i-35"><use href="#docker"/></svg><h4>webtop <a href="#" aria-label="Open"><svg><use href="#ext"/></svg></a></h4><button aria-label="Toggle details"><svg><use href="#chev"/></svg></button></header></article>
    </div>
  </div>
</section>

<section class="card">
  <header class="card-head">
    <div class="head-row">
      <h2 class="title"><svg class="i-35"><use href="#server"/></svg>VPS<span class="badge badge-lg">Connected</span></h2>
      <div class="head-side">
        <span class="count"><svg class="i-cubes"><use href="#cubes"/></svg>11 containers</span>
        <span class="count"><svg class="i-play green"><use href="#play"/></svg>7 running</span>
        <div class="btn-group"><button class="btn" aria-label="Expand all"><svg class="i-24"><use href="#expand"/></svg></button><button class="btn" aria-label="Collapse all"><svg class="i-24"><use href="#compress"/></svg></button></div>
      </div>
    </div>
    <p class="host"><svg class="i-24"><use href="#info"/></svg><span>tcp://<span class="gap gap-150"></span>:2735 | Docker 28.2.2</span></p>
    <svg class="mark"><path d="M131 80L158 85 189 91V86L225 87 260 94 274 103 265 120 241 123 198 118 197 114 160 108 158 119 168 126 158 138 143 132H102V116H118L124 99z"/></svg>
  </header>
  <div class="card-body">
    <div class="tabs" role="tablist"><button class="tab active" role="tab" aria-selected="true"><svg class="i-tab"><use href="#play"/></svg>Running (7)</button><button class="tab" role="tab" aria-selected="false"><svg class="i-tab"><use href="#stop"/></svg>Exited (2)</button><button class="tab" role="tab" aria-selected="false"><svg class="i-tabplus"><use href="#plus"/></svg>Created (2)</button></div>
    <div class="boxes">
      <article class="box"><header><svg class="i-35"><use href="#docker"/></svg><h4>d<span class="gap gap-125"></span>-1 <a href="#" aria-label="Open"><svg><use href="#ext"/></svg></a></h4><button aria-label="Toggle details"><svg><use href="#chev"/></svg></button></header>
        <svg class="mark"><path d="M95 21L136 19 171 15 220 25 215 40 212 54 86 53 80 40 95 36z"/></svg></article>
      <article class="box"><header><svg class="i-35"><use href="#docker"/></svg><h4><span class="gap gap-180"></span>frontend <a href="#" aria-label="Open"><svg><use href="#ext"/></svg></a></h4><button aria-label="Toggle details"><svg><use href="#chev"/></svg></button></header>
        <svg class="mark"><path d="M66 29L101 27 123 25 126 19 195 21 267 32 264 45 245 52 227 64 164 56 107 43 94 55 66 51z"/></svg></article>
      <article class="box"><header><svg class="i-35"><use href="#docker"/></svg><h4>docker<span class="gap gap-305"></span> <a href="#" aria-label="Open"><svg><use href="#ext"/></svg></a></h4><button aria-label="Toggle details"><svg><use href="#chev"/></svg></button></header>
        <svg class="mark"><path d="M136 1L149 3 175 22 209 23 286 21 324 19 373 21V27L425 24 451 20 473 23V30L478 31V51L444 54 368 51 355 55 317 56 248 57 209 61 186 61V52L176 55 160 49 156 32 133 14z"/></svg></article>
      <article class="box"><header><svg class="i-35"><use href="#docker"/></svg><h4>doc<span class="gap gap-225"></span>es-1 <a href="#" aria-label="Open"><svg><use href="#ext"/></svg></a></h4><button aria-label="Toggle details"><svg><use href="#chev"/></svg></button></header>
        <svg class="mark"><path d="M104 35L143 24 168 19 237 16 344 12 346 29 360 30V49L300 54 212 53 155 49 136 41 102 42z"/></svg></article>
      <article class="box"><header><svg class="i-35"><use href="#docker"/></svg><h4>docke</h4><button aria-label="Toggle details"><svg><use href="#chev"/></svg></button></header>
        <svg class="mark"><path d="M150 26L195 24 252 20 307 22 328 21 350 15 372 20 375 27 382 27V47L331 46 309 48 293 47 211 46 208 50 182 52 157 51 146 47z"/></svg></article>
      <article class="box"><header><svg class="i-35"><use href="#docker"/></svg><h4><span class="gap gap-150"></span> <a href="#" aria-label="Open"><svg><use href="#ext"/></svg></a></h4><button aria-label="Toggle details"><svg><use href="#chev"/></svg></button></header>
        <svg class="mark"><path d="M76 32L89 23 146 24 165 15 190 14 221 20V28L248 31 244 51 190 57H121L95 65H60V44L83 42z"/></svg></article>
      <article class="box"><header><svg class="i-35"><use href="#docker"/></svg><h4>clou</h4><button aria-label="Toggle details"><svg><use href="#chev"/></svg></button></header>
        <svg class="mark"><path d="M113 16L168 15 225 6 267 2 273 18H319V39L259 42 300 48V55L262 57 212 52 162 45 152 39H113z"/></svg></article>
    </div>
  </div>
</section>

<section class="stats">
  <div class="stat s-total"><svg><use href="#cubes"/></svg><strong>44</strong><span>Total Containers</span></div>
  <div class="stat s-running"><svg><use href="#play"/></svg><strong>40</strong><span>Running</span></div>
  <div class="stat s-stopped"><svg><use href="#stop"/></svg><strong>2</strong><span>Stopped</span></div>
  <div class="stat s-other"><svg><use href="#plus"/></svg><strong>2</strong><span>Other</span></div>
  <div class="stat s-images"><svg><use href="#whale"/></svg><strong>97</strong><span>Images</span></div>
  <div class="stat s-hosts"><svg><use href="#server"/></svg><strong>2/2</strong><span>Hosts Connected</span></div>
</section>
</main>
</body>
</html>
```
FILE: styles.css
```css
*, *::before, *::after { box-sizing: border-box; }

body {
  margin: 0;
  min-height: 100vh;
  background: #f8f9fa;
  color: #212529;
  font: 400 26px/42px "Open Sans", "Noto Sans", sans-serif;
}

h2, h3, h4, p { margin: 0; font-weight: 600; }
p { font-weight: 400; }
a { color: inherit; text-decoration: none; }
button { font: inherit; color: inherit; background: none; border: 0; padding: 0; margin: 0; cursor: pointer; }
svg { display: block; flex: none; fill: currentColor; }

.sprite { position: absolute; width: 0; height: 0; overflow: hidden; }

.container { width: 100%; max-width: 1982px; margin: 0 auto; padding: 0 21px; }
.stack { display: flex; flex-direction: column; gap: 43px; padding-top: 43px; padding-bottom: 60px; }

.i-24 { width: 24px; height: 24px; }
.i-28 { width: 28px; height: 28px; }
.i-35 { width: 35px; height: 35px; }
.i-brand { width: 44px; height: 35px; }
.i-plus { width: 21px; height: 24px; }
.i-cubes { width: 28px; height: 24px; }
.i-play { width: 18px; height: 24px; }
.i-tab { width: 21px; height: 28px; }
.i-tabplus { width: 24px; height: 28px; }
.i-house { width: 28px; height: 28px; }
.green { color: #198754; }

/* Top bar */
.navbar { background: #0d6efd; color: #fff; }
.nav-row { display: flex; justify-content: space-between; align-items: center; height: 97px; }
.brand { display: flex; align-items: baseline; gap: 23px; padding-top: 2px; font-size: 33px; }
.brand svg { align-self: center; }
.brand small { font-size: 29px; }
.nav-right { display: flex; gap: 42px; font-size: 27px; }
.nav-link { display: flex; align-items: center; gap: 15px; color: #8bbafe; }

.refresh {
  position: fixed;
  top: 1096px;
  right: 35px;
  z-index: 5;
  display: flex;
  align-items: center;
  justify-content: center;
  width: 94px;
  height: 84px;
  border-radius: 50%;
  background: #0d6efd;
  color: #fff;
}

/* Section cards */
.card { background: #fff; border: 1px solid #d6d8da; border-radius: 10px; }
.card-head {
  position: relative;
  padding: 14px 28px;
  background: #f7f7f7;
  border-bottom: 1px solid #d0d0d0;
  border-radius: 9px 9px 0 0;
}
.head-row { display: flex; justify-content: space-between; align-items: center; height: 53px; }
.title { display: flex; align-items: center; gap: 23px; font-size: 33px; }
.card-body { padding: 28px; }

.badge {
  display: flex;
  align-items: center;
  gap: 7px;
  height: 37px;
  padding: 0 14px;
  border-radius: 10px;
  background: #198754;
  color: #fff;
  font-size: 19px;
  font-weight: 700;
  line-height: 37px;
}
.badge svg { width: 21px; height: 21px; }
.badge-lg { height: 45px; padding: 0 17px; font-size: 24px; }

.btn {
  display: flex;
  align-items: center;
  gap: 14px;
  height: 53px;
  padding: 0 14px;
  border: 1px solid #6c757d;
  border-radius: 7px;
  color: #6c757d;
  font-size: 24px;
}
.btn-blue { border-color: #0d6efd; color: #0d6efd; }
.btn-group { display: flex; }
.btn-group .btn:first-child { border-radius: 7px 0 0 7px; }
.btn-group .btn:last-child { border-radius: 0 7px 7px 0; border-left: 0; }

.head-side { display: flex; align-items: center; color: #6c757d; font-size: 23px; }
.count { display: flex; align-items: center; gap: 13px; margin-right: 20px; }
.count + .btn-group { margin-left: 8px; }
.host { display: flex; align-items: center; gap: 14px; margin-top: 19px; color: #6c757d; font-size: 22px; line-height: 36px; }
.host .gap { margin-right: 4px; }

/* Self-hosted applications */
.group { display: flex; align-items: center; gap: 14px; margin-bottom: 28px; color: #6c757d; font-size: 26px; line-height: 34px; }
.apps { display: grid; grid-template-columns: repeat(3, 1fr); gap: 29px 42px; margin-bottom: 70px; }
.app {
  position: relative;
  display: grid;
  grid-template-columns: 56px 1fr;
  align-content: start;
  align-items: center;
  column-gap: 28px;
  min-height: 134px;
  padding: 28px;
  border: 1px solid #d9dde1;
  border-radius: 10px;
}
.app-icon { width: 56px; height: 56px; }
.app h4 { margin-bottom: 7px; font-size: 26px; line-height: 33px; }
.app p { font-size: 23px; line-height: 36px; }
.app .app-url { line-height: 43px; }
.app-url a { display: flex; align-items: center; gap: 7px; color: #0d6efd; }

/* Tabs */
.tabs { display: flex; margin-bottom: 30px; border-bottom: 1px solid #d9dde1; }
.tab {
  display: flex;
  align-items: center;
  gap: 7px;
  margin-bottom: -1px;
  padding: 15px 28px 14px;
  border: 1px solid transparent;
  border-radius: 10px 10px 0 0;
  color: #6c757d;
  font-size: 27px;
}
.tab.active { border-color: #d9dde1 #d9dde1 #fff; background: #fff; color: #495057; font-weight: 600; }

/* Containers */
.boxes {
  display: grid;
  grid-template-columns: repeat(3, 1fr);
  align-content: start;
  gap: 42px;
  min-height: 694px;
  padding-bottom: 43px;
}
.box { position: relative; background: #fff; border: 1px solid #d6d8d9; border-radius: 10px; }
.box header {
  display: flex;
  align-items: center;
  gap: 14px;
  padding: 14px 28px;
  background: #f7f7f7;
  border-bottom: 1px solid #c8c8c8;
  border-radius: 9px;
}
.box h4 { flex: 1; font-size: 26px; line-height: 34px; min-height: 34px; }
.box h4 a { display: inline-block; margin-left: 8px; color: #6c757d; line-height: 22px; vertical-align: -4px; }
.box h4 a svg { width: 22px; height: 22px; }
.box header button { color: #6c757d; }
.box header button svg { width: 20px; height: 12px; }

/* Blacked-out names */
.mark { position: absolute; left: 0; top: 0; width: 100%; height: 100%; overflow: visible; pointer-events: none; fill: #000; stroke: #1c1c1c; stroke-width: 1px; }
.gap { display: inline-block; }
.gap-110 { width: 110px; }
.gap-125 { width: 125px; }
.gap-130 { width: 130px; }
.gap-150 { width: 150px; }
.gap-180 { width: 180px; }
.gap-225 { width: 225px; }
.gap-305 { width: 305px; }

/* Totals */
.stats { display: grid; grid-template-columns: repeat(6, 1fr); gap: 42px; }
.stat {
  display: flex;
  flex-direction: column;
  align-items: center;
  padding: 28px;
  border: 1px solid rgba(0, 0, 0, 0.12);
  border-radius: 10px;
  color: #fff;
  font-size: 23px;
  line-height: 36px;
}
.stat svg { width: 70px; height: 56px; }
.stat strong { margin: 16px 0; font-size: 40px; font-weight: 600; line-height: 50px; }
.s-total { background: linear-gradient(45deg, #007bff, #6610f2); }
.s-running { background: #198754; }
.s-stopped { background: #dc3545; }
.s-other { background: #ffc107; }
.s-images { background: #0dcaf0; }
.s-hosts { background: #6c757d; }
```
